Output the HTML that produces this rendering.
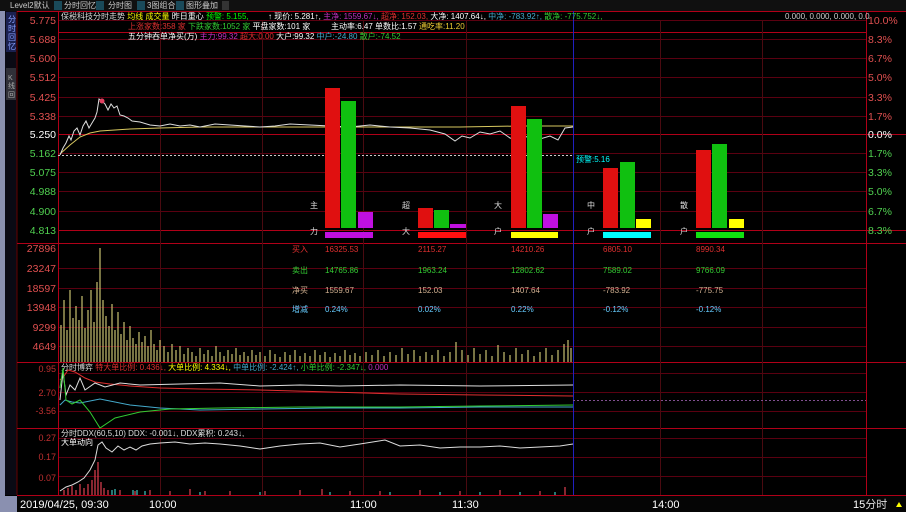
<!DOCTYPE html>
<html><head><meta charset="utf-8"><style>
html,body{margin:0;padding:0;background:#000;width:906px;height:512px;overflow:hidden}
svg{display:block}
text{font-family:"Liberation Sans","Noto Sans CJK SC",sans-serif}
.s{font-size:8px}
.ax{font-size:10.5px;font-family:"Liberation Sans",sans-serif}
</style></head><body>
<svg width="906" height="512" viewBox="0 0 906 512" xmlns="http://www.w3.org/2000/svg">
<rect width="906" height="512" fill="#000"/>
<rect x="0" y="0" width="906" height="11" fill="#101010"/>
<text x="10" y="8" class="s" fill="#ccc">Level2默认</text>
<rect x="54" y="1" width="8" height="9" fill="#1a4a5a"/><text x="64" y="8" class="s" fill="#ccc">分时回忆</text>
<rect x="96" y="1" width="8" height="9" fill="#1a4a5a"/><text x="108" y="8" class="s" fill="#ccc">分时图</text>
<rect x="137" y="1" width="8" height="9" fill="#1a4a5a"/><text x="147" y="8" class="s" fill="#ccc">3图组合</text>
<rect x="176" y="1" width="8" height="9" fill="#1a4a5a"/><text x="186" y="8" class="s" fill="#ccc">图形叠加</text>
<rect x="222" y="1" width="7" height="9" fill="#333"/>
<rect x="0" y="11" width="5" height="501" fill="#8a90b0"/>
<rect x="5" y="11" width="12" height="484" fill="#0a0a14"/>
<rect x="6" y="12" width="10" height="40" fill="#1a2050"/>
<text x="8" y="22" font-size="8" fill="#8aa0ff">分</text><text x="8" y="31" font-size="8" fill="#8aa0ff">时</text><text x="8" y="40" font-size="8" fill="#8aa0ff">回</text><text x="8" y="49" font-size="8" fill="#8aa0ff">忆</text>
<rect x="6" y="68" width="10" height="32" fill="#303038"/>
<text x="8" y="80" font-size="7" fill="#aaa">K</text><text x="8" y="88" font-size="7" fill="#aaa">线</text><text x="8" y="97" font-size="7" fill="#aaa">回</text>
<rect x="0" y="496" width="17" height="16" fill="#8a90b0"/>
<line x1="17" y1="11" x2="17" y2="495" stroke="#600" />
<g stroke="#5a0010" stroke-width="1">
<line x1="58" y1="20.5" x2="866" y2="20.5"/><line x1="58" y1="39.5" x2="866" y2="39.5"/><line x1="58" y1="58.5" x2="866" y2="58.5"/><line x1="58" y1="77.5" x2="866" y2="77.5"/><line x1="58" y1="97.5" x2="866" y2="97.5"/><line x1="58" y1="116.5" x2="866" y2="116.5"/><line x1="58" y1="153.5" x2="866" y2="153.5"/><line x1="58" y1="172.5" x2="866" y2="172.5"/><line x1="58" y1="191.5" x2="866" y2="191.5"/><line x1="58" y1="211.5" x2="866" y2="211.5"/>
<line x1="58" y1="268.5" x2="866" y2="268.5"/><line x1="58" y1="288.5" x2="866" y2="288.5"/><line x1="58" y1="307.5" x2="866" y2="307.5"/><line x1="58" y1="327.5" x2="866" y2="327.5"/><line x1="58" y1="346.5" x2="866" y2="346.5"/>
<line x1="58" y1="373.5" x2="866" y2="373.5"/><line x1="58" y1="392.5" x2="866" y2="392.5"/><line x1="58" y1="411.5" x2="866" y2="411.5"/>
<line x1="58" y1="438.5" x2="866" y2="438.5"/><line x1="58" y1="457.5" x2="866" y2="457.5"/><line x1="58" y1="476.5" x2="866" y2="476.5"/>
</g>
<g stroke="#b00018" stroke-width="1">
<line x1="17" y1="11.5" x2="906" y2="11.5"/>
<line x1="58" y1="32.5" x2="866" y2="32.5"/>
<line x1="58" y1="134.5" x2="906" y2="134.5"/>
<line x1="58" y1="230.5" x2="906" y2="230.5"/>
<line x1="17" y1="243.5" x2="906" y2="243.5"/>
<line x1="17" y1="362.5" x2="906" y2="362.5"/>
<line x1="17" y1="428.5" x2="906" y2="428.5"/>
<line x1="17" y1="495.5" x2="906" y2="495.5"/>
<line x1="58.5" y1="11" x2="58.5" y2="495"/>
<line x1="866.5" y1="11" x2="866.5" y2="495"/>
</g>
<g stroke="#4a0a10" stroke-width="1">
<line x1="160.5" y1="20" x2="160.5" y2="495"/><line x1="262.5" y1="20" x2="262.5" y2="495"/><line x1="363.5" y1="20" x2="363.5" y2="495"/><line x1="466.5" y1="20" x2="466.5" y2="495"/><line x1="660.5" y1="20" x2="660.5" y2="495"/><line x1="762.5" y1="20" x2="762.5" y2="495"/>
</g>
<line x1="573.5" y1="11" x2="573.5" y2="495" stroke="#2020c0"/>
<line x1="58" y1="155.5" x2="573" y2="155.5" stroke="#ccc" stroke-dasharray="2,2"/>
<g class="ax" text-anchor="end">
<text x="56" y="24" fill="#e05050">5.775</text><text x="56" y="43" fill="#e05050">5.688</text><text x="56" y="62" fill="#e05050">5.600</text><text x="56" y="81" fill="#e05050">5.512</text><text x="56" y="101" fill="#e05050">5.425</text><text x="56" y="120" fill="#e05050">5.338</text>
<text x="56" y="138" fill="#fff">5.250</text>
<text x="56" y="157" fill="#50d050">5.162</text><text x="56" y="176" fill="#50d050">5.075</text><text x="56" y="195" fill="#50d050">4.988</text><text x="56" y="215" fill="#50d050">4.900</text><text x="56" y="234" fill="#50d050">4.813</text>
<text x="56" y="252" fill="#e05050">27896</text><text x="56" y="272" fill="#e05050">23247</text><text x="56" y="292" fill="#e05050">18597</text><text x="56" y="311" fill="#e05050">13948</text><text x="56" y="331" fill="#e05050">9299</text><text x="56" y="350" fill="#e05050">4649</text>
</g>
<g class="ax" text-anchor="start">
<text x="868" y="24" fill="#e05050">10.0%</text><text x="868" y="43" fill="#e05050">8.3%</text><text x="868" y="62" fill="#e05050">6.7%</text><text x="868" y="81" fill="#e05050">5.0%</text><text x="868" y="101" fill="#e05050">3.3%</text><text x="868" y="120" fill="#e05050">1.7%</text>
<text x="868" y="138" fill="#fff">0.0%</text>
<text x="868" y="157" fill="#50d050">1.7%</text><text x="868" y="176" fill="#50d050">3.3%</text><text x="868" y="195" fill="#50d050">5.0%</text><text x="868" y="215" fill="#50d050">6.7%</text><text x="868" y="234" fill="#50d050">8.3%</text>
</g>
<g font-size="9" fill="#c03030" text-anchor="end" font-family="Liberation Sans">
<text x="56" y="372">0.95</text><text x="56" y="396">2.70</text><text x="56" y="414">-3.56</text>
<text x="56" y="441">0.27</text><text x="56" y="460">0.17</text><text x="56" y="481">0.07</text>
</g>
<g class="s">
<text x="61" y="19" fill="#ddd">保税科技分时走势 <tspan fill="#ff0">均线</tspan> <tspan fill="#ff0">成交量</tspan> <tspan fill="#fff">昨日重心</tspan> <tspan fill="#0f0">预警: 5.155,</tspan></text>
<text x="268" y="19" fill="#fff">↑ 现价: 5.281↑, <tspan fill="#c030c0">主净: 1559.67↓,</tspan> <tspan fill="#e03030">超净: 152.03,</tspan> 大净: 1407.64↓, <tspan fill="#4ac">中净: -783.92↑,</tspan> <tspan fill="#3c3">散净: -775.752↓,</tspan></text>
<text x="785" y="19" fill="#ccc">0.000, 0.000, 0.000, 0.0</text>
<text x="128" y="29" fill="#e03030">上涨家数:358 家  <tspan fill="#3c3">下跌家数:1052 家</tspan> <tspan fill="#fff">平盘家数:101 家</tspan></text>
<text x="331" y="29" fill="#fff">主动率:6.47 单数比:1.57 <tspan fill="#ec3">通吃率:11.20</tspan></text>
<text x="128" y="39" fill="#fff">五分钟吞单净买(万) <tspan fill="#c030c0">主力:99.32</tspan>  <tspan fill="#e03030">超大:0.00</tspan>  大户:99.32  <tspan fill="#4ac">中户:-24.80</tspan>  <tspan fill="#3c3">散户:-74.52</tspan></text>
</g>
<polyline fill="none" stroke="#d8c860" stroke-width="1" points="60,154 70,145 80,137 90,133 100,131 130,129 160,128 200,127 260,127 330,127 400,127 460,127 520,126 573,126"/>
<polyline fill="none" stroke="#ddd" stroke-width="1" points="60,155 63,148 66,143 69,136 71,140 74,131 77,128 80,135 83,126 86,121 89,128 92,123 95,118 97,112 99,99 102,101 105,104 108,110 111,104 114,108 117,106 120,115 124,116 128,118 132,121 140,122 150,125 160,126 170,124 180,126 190,125 200,127 215,124 230,125 245,126 260,127 275,126 290,124 310,125 330,126 350,127 370,125 390,127 410,128 430,130 445,134 455,141 462,136 470,138 480,132 490,134 500,131 510,138 520,140 530,135 540,139 550,136 558,140 565,128 573,127"/>
<circle cx="102" cy="101" r="2.5" fill="#e04060"/>
<text x="576" y="162" class="s" fill="#0ff">预警:5.16</text>
<rect x="325" y="88" width="15" height="140" fill="#e01010"/><rect x="341" y="101" width="15" height="127" fill="#10c010"/><rect x="358" y="212" width="15" height="16" fill="#c010e0"/><rect x="325" y="232" width="48" height="6" fill="#c010e0"/>
<rect x="418" y="208" width="15" height="20" fill="#e01010"/><rect x="434" y="210" width="15" height="18" fill="#10c010"/><rect x="450" y="224" width="16" height="4" fill="#c010e0"/><rect x="418" y="232" width="48" height="6" fill="#ff1010"/>
<rect x="511" y="106" width="15" height="122" fill="#e01010"/><rect x="527" y="119" width="15" height="109" fill="#10c010"/><rect x="543" y="214" width="15" height="14" fill="#c010e0"/><rect x="511" y="232" width="47" height="6" fill="#ff0"/>
<rect x="603" y="168" width="15" height="60" fill="#e01010"/><rect x="620" y="162" width="15" height="66" fill="#10c010"/><rect x="636" y="219" width="15" height="9" fill="#ff0"/><rect x="603" y="232" width="48" height="6" fill="#0ff"/>
<rect x="696" y="150" width="15" height="78" fill="#e01010"/><rect x="712" y="144" width="15" height="84" fill="#10c010"/><rect x="729" y="219" width="15" height="9" fill="#ff0"/><rect x="696" y="232" width="48" height="6" fill="#10e010"/>
<g class="s" fill="#ddd">
<text x="310" y="208">主</text><text x="310" y="234">力</text>
<text x="402" y="208">超</text><text x="402" y="234">大</text>
<text x="494" y="208">大</text><text x="494" y="234">户</text>
<text x="587" y="208">中</text><text x="587" y="234">户</text>
<text x="680" y="208">散</text><text x="680" y="234">户</text>
</g>
<g class="s">
<text x="292" y="252" fill="#e03030">买入</text><text x="325" y="252" fill="#e03030">16325.53</text><text x="418" y="252" fill="#e03030">2115.27</text><text x="511" y="252" fill="#e03030">14210.26</text><text x="603" y="252" fill="#e03030">6805.10</text><text x="696" y="252" fill="#e03030">8990.34</text>
<text x="292" y="273" fill="#3c3">卖出</text><text x="325" y="273" fill="#3c3">14765.86</text><text x="418" y="273" fill="#3c3">1963.24</text><text x="511" y="273" fill="#3c3">12802.62</text><text x="603" y="273" fill="#3c3">7589.02</text><text x="696" y="273" fill="#3c3">9766.09</text>
<text x="292" y="293" fill="#d0b090">净买</text><text x="325" y="293" fill="#d0b090">1559.67</text><text x="418" y="293" fill="#d0b090">152.03</text><text x="511" y="293" fill="#d0b090">1407.64</text><text x="603" y="293" fill="#d0b090">-783.92</text><text x="696" y="293" fill="#d0b090">-775.75</text>
<text x="292" y="312" fill="#6cf">增减</text><text x="325" y="312" fill="#6cf">0.24%</text><text x="418" y="312" fill="#6cf">0.02%</text><text x="511" y="312" fill="#6cf">0.22%</text><text x="603" y="312" fill="#6cf">-0.12%</text><text x="696" y="312" fill="#6cf">-0.12%</text>
</g>
<path stroke="#c8c070" stroke-width="1.2" fill="none" d="M61 362V325M64 362V300M67 362V330M70 362V290M73 362V318M76 362V306M79 362V320M82 362V296M85 362V328M88 362V310M91 362V290M94 362V322M97 362V282M100 362V248M103 362V300M106 362V316M109 362V326M112 362V304M115 362V330M118 362V312M121 362V334M124 362V322M127 362V340M130 362V326M133 362V338M136 362V344M139 362V332M142 362V342M145 362V336M148 362V346M151 362V330M154 362V344M157 362V350M160 362V340M164 362V346M168 362V352M172 362V344M176 362V350M180 362V346M184 362V354M188 362V348M192 362V352M196 362V356M200 362V348M204 362V354M208 362V350M212 362V356M216 362V346M220 362V352M224 362V356M228 362V350M232 362V354M236 362V348M240 362V355M244 362V352M248 362V356M252 362V350M256 362V355M260 362V352M265 362V356M270 362V350M275 362V354M280 362V357M285 362V352M290 362V355M295 362V350M300 362V356M305 362V353M310 362V356M315 362V350M320 362V355M325 362V352M330 362V357M335 362V353M340 362V356M345 362V350M350 362V355M355 362V353M360 362V356M366 362V352M372 362V355M378 362V350M384 362V356M390 362V352M396 362V355M402 362V348M408 362V354M414 362V350M420 362V356M426 362V352M432 362V355M438 362V350M444 362V356M450 362V352M456 362V342M462 362V350M468 362V355M474 362V348M480 362V354M486 362V350M492 362V356M498 362V345M504 362V352M510 362V355M516 362V348M522 362V354M528 362V350M534 362V356M540 362V352M546 362V348M552 362V355M558 362V350M564 362V344M568 362V340M571 362V348"/>
<g class="s"><text x="61" y="370" fill="#ddd">分时博弈 <tspan fill="#e03030">特大单比例: 0.436↓,</tspan> <tspan fill="#ff0">大单比例: 4.334↓,</tspan> <tspan fill="#4ac">中单比例: -2.424↑,</tspan> <tspan fill="#3c3">小单比例: -2.347↓,</tspan> <tspan fill="#c030c0">0.000</tspan></text></g>
<polyline fill="none" stroke="#e03030" points="60,380 64,376 68,370 75,372 85,378 95,382 110,384 130,386 160,388 200,389 260,390 330,392 400,394 480,395 573,396"/>
<polyline fill="none" stroke="#ddd" points="60,400 63,372 66,395 70,385 75,390 80,378 85,390 95,383 105,387 120,383 140,385 180,384 220,383 260,386 300,385 340,386 400,385 480,386 573,385"/>
<polyline fill="none" stroke="#4ac" points="60,405 65,400 72,402 80,403 100,399 130,405 160,408 200,410 260,409 330,408 400,408 480,407 573,407"/>
<polyline fill="none" stroke="#3c3" points="60,388 63,368 66,400 72,404 80,400 90,412 100,428 115,418 140,412 170,409 220,408 300,407 400,407 480,406 573,405"/>
<line x1="573" y1="400.5" x2="866" y2="400.5" stroke="#805090" stroke-dasharray="2,2"/>
<g class="s"><text x="61" y="436" fill="#ddd">分时DDX(60,5,10) DDX: -0.001↓, DDX累积: 0.243↓,</text><text x="61" y="445" fill="#fff">大单动向</text></g>
<polyline fill="none" stroke="#ddd" points="60,491 66,487 72,485 78,482 84,478 90,470 95,460 98,445 102,442 106,448 112,452 118,446 124,450 130,447 136,450 142,446 150,444 160,443 175,442 190,444 205,443 220,444 240,446 260,449 280,446 300,444 320,443 340,447 360,444 385,440 400,446 420,445 440,448 460,447 480,447 500,446 520,448 540,447 560,446 573,444"/>
<path stroke="#e04050" stroke-width="1.2" fill="none" d="M64 495V490M68 495V488M72 495V486M76 495V490M80 495V484M84 495V488M88 495V484M92 495V480M95 495V470M98 495V462M101 495V482M104 495V488M108 495V490M120 495V490M135 495V491M150 495V490M170 495V491M190 495V489M205 495V491M230 495V491M265 495V491M300 495V490M322 495V489M350 495V491M380 495V491M420 495V490M460 495V491M500 495V490M540 495V491M565 495V487"/>
<path stroke="#40c8c0" stroke-width="1.2" fill="none" d="M112 495V490M115 495V489M133 495V490M137 495V490M145 495V491M200 495V492M260 495V492M330 495V492M390 495V492M440 495V492M480 495V492M520 495V492M555 495V492"/>
<rect x="17" y="496" width="889" height="16" fill="#050505"/>
<g font-size="11" fill="#fff" font-family="Liberation Sans">
<text x="20" y="508">2019/04/25, 09:30</text><text x="149" y="508">10:00</text><text x="350" y="508">11:00</text><text x="452" y="508">11:30</text><text x="652" y="508">14:00</text>
<text x="853" y="508" font-family="Liberation Sans,Noto Sans CJK SC,sans-serif">15<tspan fill="#ddd">分时</tspan></text>
</g>
<polygon points="896,507 899,502 902,507" fill="#ff0"/>
</svg>
</body></html>
